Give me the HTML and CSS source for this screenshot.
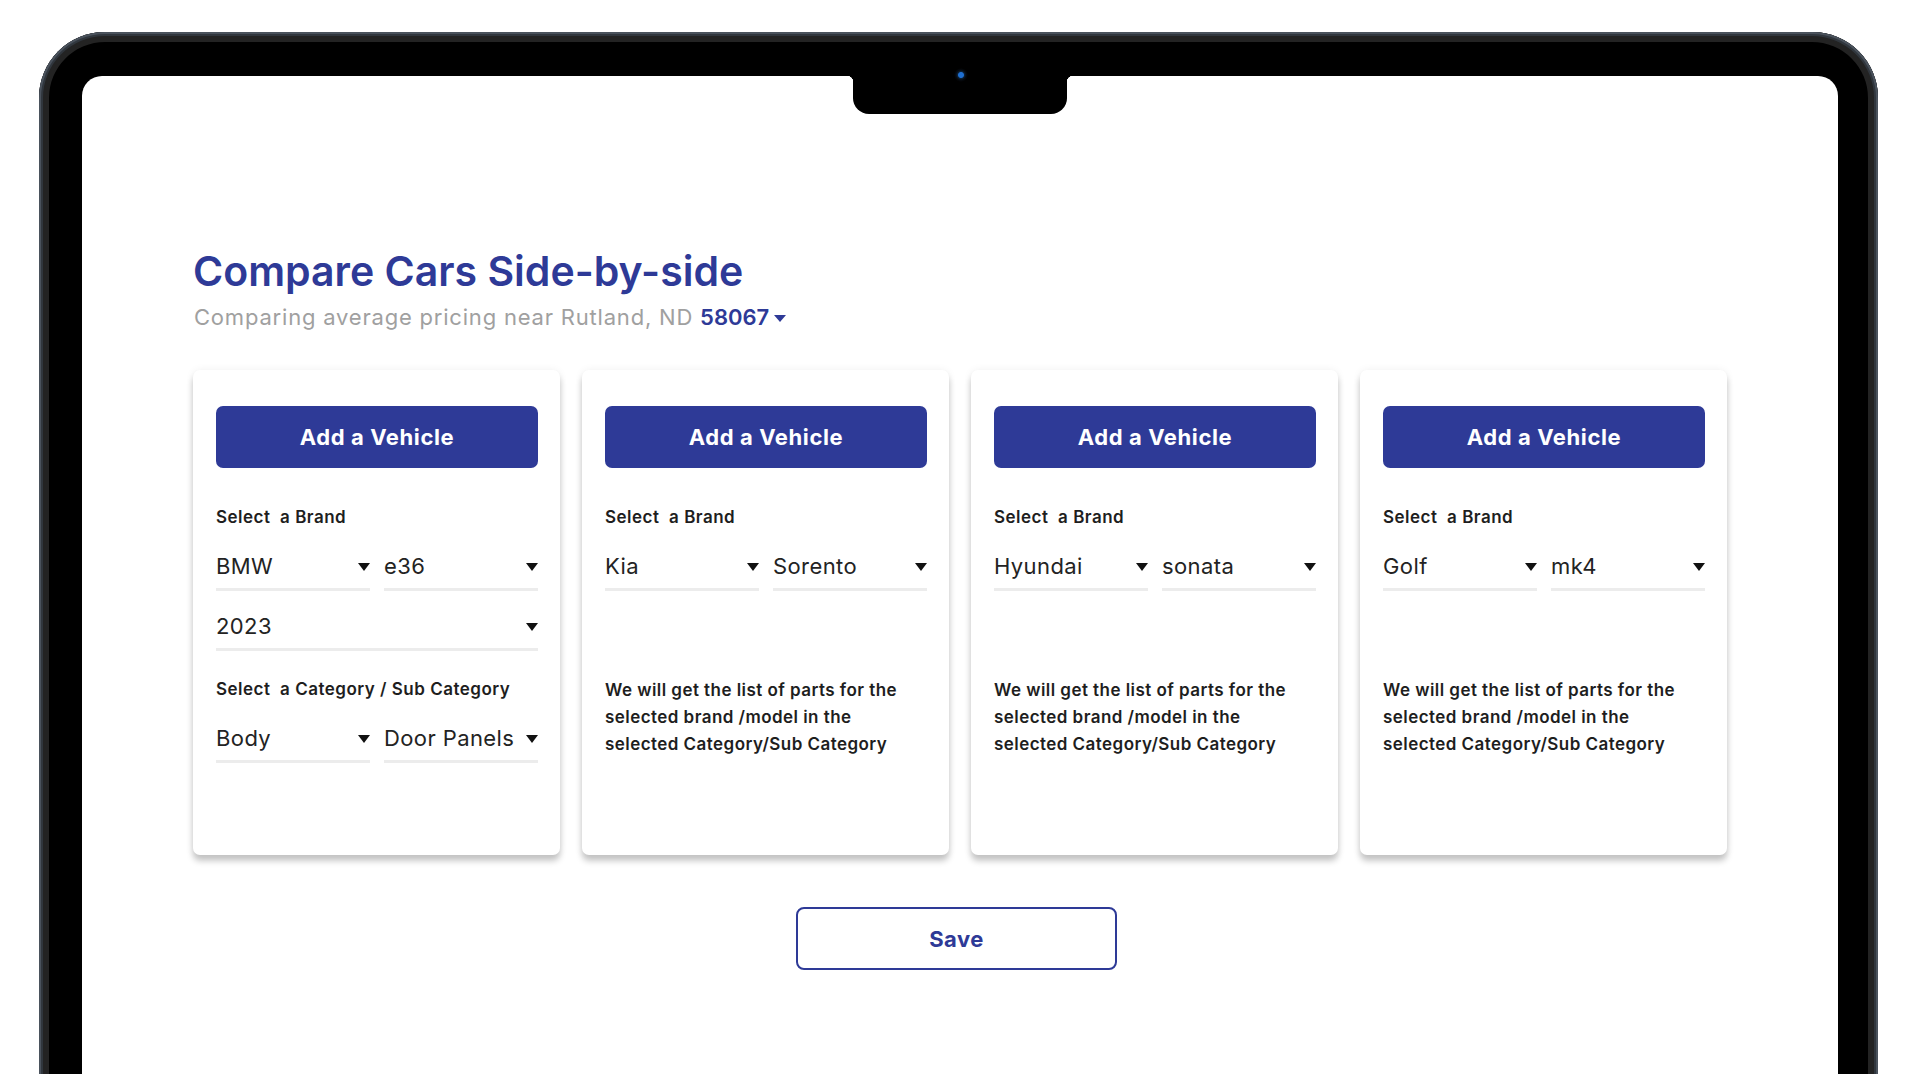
FILE: index.html
```html
<!DOCTYPE html>
<html lang="en">
<head>
<meta charset="utf-8">
<title>Compare Cars Side-by-side</title>
<link rel="stylesheet" href="styles.css">
</head>
<body>
<div class="stage">
  <div class="device">
    <div class="screen">
      <div class="notch"><span class="camera"></span></div>
      <div class="content">
        <h1 class="title">Compare Cars Side-by-side</h1>
        <p class="subtitle">Comparing average pricing near Rutland, ND <span class="zip">58067</span><span class="zip-caret"></span></p>

        <div class="cards">
          <div class="card">
            <button class="btn-add">Add a Vehicle</button>
            <div class="label">Select&nbsp; a Brand</div>
            <div class="row">
              <div class="select"><span>BMW</span><i class="caret"></i></div>
              <div class="select"><span>e36</span><i class="caret"></i></div>
            </div>
            <div class="row row-year">
              <div class="select"><span>2023</span><i class="caret"></i></div>
            </div>
            <div class="label label-cat">Select&nbsp; a Category / Sub Category</div>
            <div class="row">
              <div class="select"><span>Body</span><i class="caret"></i></div>
              <div class="select"><span>Door Panels</span><i class="caret"></i></div>
            </div>
          </div>

          <div class="card">
            <button class="btn-add">Add a Vehicle</button>
            <div class="label">Select&nbsp; a Brand</div>
            <div class="row">
              <div class="select"><span>Kia</span><i class="caret"></i></div>
              <div class="select"><span>Sorento</span><i class="caret"></i></div>
            </div>
            <p class="note">We will get the list of parts for the<br>selected brand /model in the<br>selected Category/Sub Category</p>
          </div>

          <div class="card">
            <button class="btn-add">Add a Vehicle</button>
            <div class="label">Select&nbsp; a Brand</div>
            <div class="row">
              <div class="select"><span>Hyundai</span><i class="caret"></i></div>
              <div class="select"><span>sonata</span><i class="caret"></i></div>
            </div>
            <p class="note">We will get the list of parts for the<br>selected brand /model in the<br>selected Category/Sub Category</p>
          </div>

          <div class="card">
            <button class="btn-add">Add a Vehicle</button>
            <div class="label">Select&nbsp; a Brand</div>
            <div class="row">
              <div class="select"><span>Golf</span><i class="caret"></i></div>
              <div class="select"><span>mk4</span><i class="caret"></i></div>
            </div>
            <p class="note">We will get the list of parts for the<br>selected brand /model in the<br>selected Category/Sub Category</p>
          </div>
        </div>

        <div class="actions">
          <button class="btn-save">Save</button>
        </div>
      </div>
    </div>
  </div>
</div>
</body>
</html>
```

FILE: styles.css
```css
* { box-sizing: border-box; }

html, body {
  margin: 0;
  padding: 0;
  background: #ffffff;
}

body {
  font-family: Inter, "Liberation Sans", sans-serif;
  color: #222;
}

.stage {
  height: 1074px;
  padding-top: 32px;
  padding-left: 39px;
  overflow: hidden;
}

.device {
  width: 1839px;
  height: 1120px;
  background: #000;
  border-radius: 66px 66px 0 0;
  padding: 44px 40px 0 43px;
  box-shadow: inset 0 0 0 2px #4a525c, inset 0 0 0 4px #30363d, inset 0 0 0 10px #232323;
}

.screen {
  position: relative;
  height: 100%;
  background: #fff;
  border-radius: 20px 20px 0 0;
}

.notch {
  position: absolute;
  left: 771px;
  top: 0;
  width: 214px;
  height: 38px;
  background: #000;
  border-radius: 0 0 16px 16px;
}

.notch::before,
.notch::after {
  content: "";
  position: absolute;
  top: 0;
  width: 6px;
  height: 6px;
}

.notch::before {
  left: -6px;
  background: radial-gradient(circle at 0 100%, transparent 6px, #000 6.5px);
}

.notch::after {
  right: -6px;
  background: radial-gradient(circle at 100% 100%, transparent 6px, #000 6.5px);
}

.camera {
  position: absolute;
  left: 101px;
  top: -8px;
  width: 14px;
  height: 14px;
  border-radius: 50%;
  background: radial-gradient(circle, #1f6fd1 0 2.5px, #0b2036 3.5px, #060a10 5px, #000 7px);
}

.content {
  padding: 171px 111px 0 111px;
}

.title {
  margin: 0;
  font-size: 41px;
  line-height: 48px;
  font-weight: 600;
  color: #2e3a97;
  letter-spacing: 0;
}

.subtitle {
  margin: 9px 0 0 1px;
  font-size: 22px;
  line-height: 26px;
  color: #a0a0a0;
  letter-spacing: 0.8px;
  display: flex;
  align-items: center;
  white-space: pre;
}

.zip {
  color: #2e3a97;
  font-weight: 600;
  letter-spacing: 0;
}

.zip-caret {
  display: inline-block;
  margin-left: 5px;
  margin-top: 2px;
  border-left: 6px solid transparent;
  border-right: 6px solid transparent;
  border-top: 7px solid #2e3a97;
}

.cards {
  margin-top: 40px;
  display: grid;
  grid-template-columns: repeat(4, 1fr);
  gap: 22px;
}

.card {
  min-height: 485px;
  background: #fff;
  border-radius: 7px;
  padding: 36px 22px 0 23px;
  box-shadow: 0 6px 6px rgba(0, 0, 0, 0.22), 0 0 8px rgba(0, 0, 0, 0.06);
}

.btn-add {
  display: block;
  width: 100%;
  height: 62px;
  border: 0;
  border-radius: 7px;
  background: #2e3a97;
  color: #fff;
  font-family: inherit;
  font-size: 22px;
  font-weight: 700;
  letter-spacing: 0.6px;
  cursor: pointer;
}

.label {
  margin-top: 39px;
  font-size: 17px;
  line-height: 20px;
  font-weight: 600;
  color: #1e1e1e;
  letter-spacing: 0.5px;
}

.label-cat {
  margin-top: 28px;
}

.row {
  display: flex;
  gap: 14px;
  margin-top: 26px;
}

.row-year {
  margin-top: 22px;
}

.select {
  flex: 1;
  min-width: 0;
  display: flex;
  align-items: center;
  justify-content: space-between;
  height: 38px;
  padding-bottom: 9px;
  border-bottom: 3px solid #ececec;
  font-size: 22px;
  line-height: 26px;
  color: #232323;
  letter-spacing: 0.4px;
  white-space: nowrap;
}

.caret {
  flex: none;
  width: 0;
  height: 0;
  margin-left: 4px;
  margin-top: 2px;
  border-left: 6.5px solid transparent;
  border-right: 6.5px solid transparent;
  border-top: 8px solid #111;
}

.note {
  margin: 86px 0 0 0;
  font-size: 17px;
  line-height: 27px;
  font-weight: 600;
  color: #1e1e1e;
  letter-spacing: 0.45px;
}

.actions {
  display: flex;
  justify-content: center;
  margin-top: 52px;
  padding-right: 7px;
}

.btn-save {
  width: 321px;
  height: 63px;
  border: 2px solid #2e3a97;
  border-radius: 8px;
  background: #fff;
  color: #2e3a97;
  font-family: inherit;
  font-size: 22px;
  font-weight: 700;
  letter-spacing: 0.5px;
  cursor: pointer;
}
```
